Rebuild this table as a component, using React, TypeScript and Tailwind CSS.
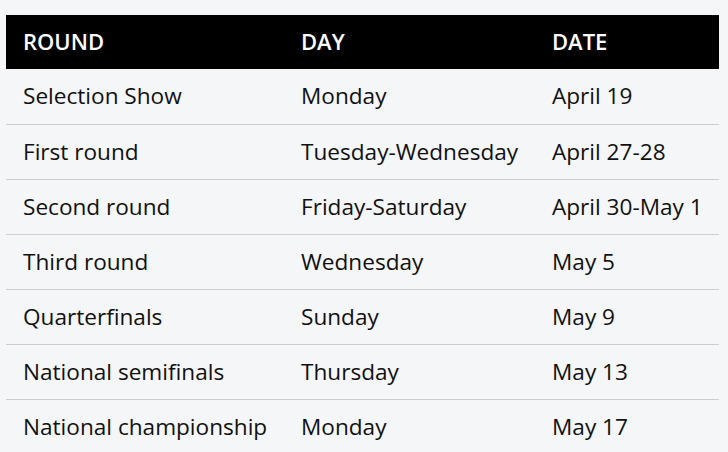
const rows = [
  ["Selection Show", "Monday", "April 19"],
  ["First round", "Tuesday-Wednesday", "April 27-28"],
  ["Second round", "Friday-Saturday", "April 30-May 1"],
  ["Third round", "Wednesday", "May 5"],
  ["Quarterfinals", "Sunday", "May 9"],
  ["National semifinals", "Thursday", "May 13"],
  ["National championship", "Monday", "May 17"],
];

export default function App() {
  return (
    <div className="min-h-[452px] w-[728px] bg-[#f5f6f8] pt-[15px] pl-[6px] font-['Open_Sans',sans-serif] text-[#111]">
      <table className="w-[713px] table-fixed border-collapse text-[22.6px]">
        <colgroup>
          <col className="w-[278px]" />
          <col className="w-[251px]" />
          <col />
        </colgroup>
        <thead>
          <tr className="h-[54px] bg-black text-left text-[22px] text-white">
            <th className="px-[17px] pb-px font-semibold">ROUND</th>
            <th className="px-[17px] pb-px font-semibold">DAY</th>
            <th className="px-[17px] pb-px font-semibold">DATE</th>
          </tr>
        </thead>
        <tbody>
          {rows.map((r, i) => (
            <tr key={r[0]} className={i > 0 ? "h-[55px] border-t border-[#cdcdcd]" : "h-[55px]"}>
              {r.map((c) => (
                <td key={c} className="px-[17px] whitespace-nowrap">{c}</td>
              ))}
            </tr>
          ))}
        </tbody>
      </table>
    </div>
  );
}
